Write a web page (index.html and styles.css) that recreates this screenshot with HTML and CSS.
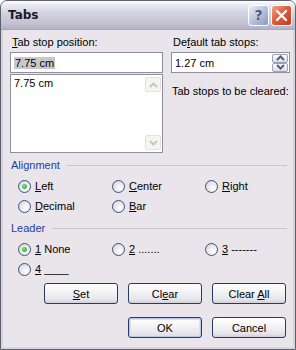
FILE: index.html
```html
<!DOCTYPE html>
<html>
<head>
<meta charset="utf-8">
<link rel="stylesheet" href="styles.css">
</head>
<body>
<div class="window">
  <div class="titlebar">
    <span class="title">Tabs</span>
    <div class="tbtns">
      <span class="tb help">?</span>
      <span class="tb close"><svg width="13" height="13" viewBox="0 0 13 13"><path d="M2 2 L11 11 M11 2 L2 11" stroke="#fff" stroke-width="2.4" stroke-linecap="round"/></svg></span>
    </div>
  </div>
  <div class="body">
    <div class="top">
      <div class="col">
        <div class="lbl"><u>T</u>ab stop position:</div>
        <div class="edit"><span class="sel">7.75 cm</span></div>
        <div class="list">
          <div class="items">7.75 cm</div>
          <div class="vscroll">
            <span class="sbtn"><svg width="9" height="6" viewBox="0 0 9 6"><path d="M1 5 L4.5 1.5 L8 5" fill="none" stroke="#c9c7ba" stroke-width="2"/></svg></span>
            <span class="sbtn"><svg width="9" height="6" viewBox="0 0 9 6"><path d="M1 1 L4.5 4.5 L8 1" fill="none" stroke="#c9c7ba" stroke-width="2"/></svg></span>
          </div>
        </div>
      </div>
      <div class="col">
        <div class="lbl">De<u>f</u>ault tab stops:</div>
        <div class="edit spin">
          <span>1.27 cm</span>
          <div class="spinbtns">
            <span class="spb"><svg width="9" height="6" viewBox="0 0 9 6"><path d="M1 5 L4.5 1.5 L8 5" fill="none" stroke="#4d6185" stroke-width="2"/></svg></span>
            <span class="spb"><svg width="9" height="6" viewBox="0 0 9 6"><path d="M1 1 L4.5 4.5 L8 1" fill="none" stroke="#4d6185" stroke-width="2"/></svg></span>
          </div>
        </div>
        <div class="cleared">Tab stops to be cleared:</div>
      </div>
    </div>

    <div class="group">
      <div class="ghead"><span>Alignment</span><span class="gline"></span></div>
      <div class="radios">
        <div class="radio"><span class="rb on"></span><span><u>L</u>eft</span></div>
        <div class="radio"><span class="rb"></span><span><u>C</u>enter</span></div>
        <div class="radio"><span class="rb"></span><span><u>R</u>ight</span></div>
        <div class="radio"><span class="rb"></span><span><u>D</u>ecimal</span></div>
        <div class="radio"><span class="rb"></span><span><u>B</u>ar</span></div>
      </div>
    </div>

    <div class="group leader">
      <div class="ghead"><span>Leader</span><span class="gline"></span></div>
      <div class="radios">
        <div class="radio"><span class="rb on"></span><span><u>1</u> None</span></div>
        <div class="radio"><span class="rb"></span><span><u>2</u> .......</span></div>
        <div class="radio"><span class="rb"></span><span><u>3</u> -------</span></div>
        <div class="radio"><span class="rb"></span><span><u>4</u> ____</span></div>
      </div>
    </div>

    <div class="btnrow">
      <span class="btn"><span><u>S</u>et</span></span>
      <span class="btn"><span>Cl<u>e</u>ar</span></span>
      <span class="btn"><span>Clear <u>A</u>ll</span></span>
    </div>
    <div class="btnrow ok">
      <span class="btn def"><span>OK</span></span>
      <span class="btn"><span>Cancel</span></span>
    </div>
  </div>
</div>
</body>
</html>
```
FILE: styles.css
```css
* { box-sizing: border-box; }
html, body { margin: 0; padding: 0; background: #fff; }
body {
  font-family: "Liberation Sans", Arial, sans-serif;
  font-size: 11px;
  color: #000;
}
.window {
  width: 296px;
  height: 350px;
  display: flex;
  flex-direction: column;
  background: #e9e5eb;
  border: 1px solid #5f5f70;
  border-radius: 7px 7px 0 0;
  overflow: hidden;
}
.titlebar {
  height: 29px;
  flex: none;
  display: flex;
  align-items: center;
  justify-content: space-between;
  padding: 0 3px 0 7px;
  background: linear-gradient(#ffffff 0%, #e9e9f1 15%, #d2d2de 45%, #c2c2d2 80%, #b2b2c4 100%);
  border-bottom: 1px solid #a8a8bc;
}
.title {
  font-family: "DejaVu Sans", sans-serif;
  font-weight: bold;
  font-size: 12px;
  color: #1a1a2a;
}
.tbtns { display: flex; gap: 2px; }
.tb {
  width: 21px;
  height: 21px;
  border: 1px solid #fff;
  border-radius: 3px;
  display: flex;
  align-items: center;
  justify-content: center;
}
.help {
  background: linear-gradient(135deg, #e8ecf6 0%, #b8c2dc 50%, #8d99bb 100%);
  font-family: "DejaVu Sans", sans-serif;
  font-weight: bold;
  font-size: 14px;
  color: #4a5878;
  text-shadow: 0 0 1px #fff;
}
.close {
  background: linear-gradient(135deg, #f3a48a 0%, #de5c3a 45%, #c03c20 100%);
}
.body {
  flex: 1;
  display: flex;
  flex-direction: column;
  padding: 4px 6px 0 7px;
  border-left: 2px solid #d8d4dc;
  border-right: 2px solid #d8d4dc;
  border-bottom: 2px solid #d8d4dc;
}
.top {
  display: grid;
  grid-template-columns: 153px 119px;
  column-gap: 8px;
}
.col { display: flex; flex-direction: column; }
.lbl { height: 18px; padding: 2px 0 0 2px; }
.edit {
  height: 21px;
  border: 1px solid #8f8f9d;
  background: #fff;
  display: flex;
  align-items: center;
  padding-left: 3px;
}
.sel { background: #c8c8cc; padding: 0 1px; }
.list {
  margin-top: 1px;
  height: 79px;
  border: 1px solid #8f8f9d;
  background: #fff;
  display: flex;
}
.items { flex: 1; padding: 2px 3px; }
.vscroll {
  width: 16px;
  margin: 2px 1px 2px 0;
  display: flex;
  flex-direction: column;
  justify-content: space-between;
}
.sbtn {
  height: 15px;
  border: 1px solid #e4e2da;
  border-radius: 2px;
  background: #f6f5f0;
  display: flex;
  align-items: center;
  justify-content: center;
}
.spin { justify-content: space-between; padding-right: 1px; }
.spinbtns {
  width: 16px;
  height: 18px;
  display: flex;
  flex-direction: column;
}
.spb {
  flex: 1;
  border: 1px solid #9aa2b8;
  border-radius: 2px;
  background: linear-gradient(#ffffff, #dcdce4);
  display: flex;
  align-items: center;
  justify-content: center;
}
.cleared { margin-top: 12px; padding-left: 1px; }

.group { margin-top: 5px; }
.ghead {
  display: flex;
  align-items: center;
  height: 14px;
  color: #1c3ea8;
  padding-left: 1px;
}
.gline {
  flex: 1;
  height: 1px;
  background: #c8c6cc;
  margin-left: 7px;
}
.radios {
  display: grid;
  grid-template-columns: 94px 93px auto;
  row-gap: 6px;
  margin: 7px 0 0 8px;
}
.radio { display: flex; align-items: center; height: 14px; }
.rb {
  width: 13px;
  height: 13px;
  border-radius: 50%;
  border: 1px solid #3c5276;
  background: radial-gradient(circle at 65% 65%, #ffffff 0%, #e8e8ec 50%, #c9c9d2 100%);
  margin-right: 4px;
  display: flex;
  align-items: center;
  justify-content: center;
  flex: none;
}
.rb.on::after {
  content: "";
  width: 5px;
  height: 5px;
  border-radius: 50%;
  background: radial-gradient(circle at 40% 40%, #7ee07e, #21a121);
}
.leader { margin-top: 8px; }
.btnrow {
  display: flex;
  justify-content: flex-end;
  gap: 10px;
  margin-top: 7px;
  padding-right: 1px;
}
.btnrow.ok { margin-top: 13px; }
.btn {
  width: 74px;
  height: 21px;
  border: 1px solid #263c66;
  border-radius: 3px;
  background: linear-gradient(#ffffff 0%, #f4f4f6 40%, #e4e3ea 85%, #cfcfd8 100%);
  display: flex;
  align-items: center;
  justify-content: center;
}
.btn.def {
  box-shadow: inset 0 0 0 1px #b8c8e8, inset 0 0 0 2px #d8e2f4;
}
```
